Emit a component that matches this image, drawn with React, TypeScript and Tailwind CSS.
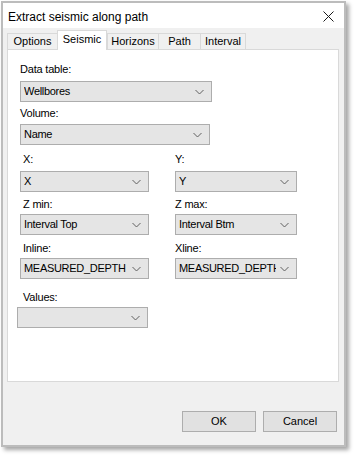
const tabs = [
  { name: "Options", w: "w-[50px]" },
  { name: "Seismic", w: "w-[50px]", active: true },
  { name: "Horizons", w: "w-[51px]" },
  { name: "Path", w: "w-[42px]" },
  { name: "Interval", w: "w-[46px]", last: true },
];

function Chevron() {
  return (
    <svg width="9" height="6" viewBox="0 0 9 6" className="shrink-0">
      <polyline points="0.5,1 4.5,5 8.5,1" fill="none" stroke="#606060" strokeWidth="1" />
    </svg>
  );
}

function Combo({ value, w }: { value: string; w: string }) {
  return (
    <div className={`${w} h-[21px] flex items-center bg-[#e5e5e5] border border-[#adadad] pl-[3px] pr-[7px]`}>
      <span className="flex-1 overflow-hidden whitespace-nowrap text-[11px] leading-[13px] tracking-[-0.3px] text-black mr-[4px]">{value}</span>
      <Chevron />
    </div>
  );
}

function Label({ text, indent }: { text: string; indent?: boolean }) {
  return <div className={`h-[13px] text-[11px] leading-[13px] tracking-[-0.2px] text-black ${indent ? "pl-[3px]" : ""}`}>{text}</div>;
}

export default function App() {
  return (
    <div className="w-[354px] h-[457px] bg-white overflow-hidden" style={{ fontFamily: '"Liberation Sans", Arial, sans-serif' }}>
      <div className="ml-[1px] mt-[1px] w-[345px] h-[446px] border-2 border-[#bcbcbc] flex flex-col shadow-[3px_3px_4px_rgba(0,0,0,0.35)]">
        {/* Title bar */}
        <div className="h-[25px] bg-white flex items-center justify-between pl-[5px] pr-[10px] pt-[2px]">
          <span className="text-[12px] text-black">Extract seismic along path</span>
          <svg width="11" height="11" viewBox="0 0 11 11">
            <path d="M0.5 0.5 L10.5 10.5 M10.5 0.5 L0.5 10.5" stroke="#1a1a1a" strokeWidth="1" />
          </svg>
        </div>

        {/* Body */}
        <div className="flex-1 bg-[#f0f0f0] flex flex-col pl-[4px] pr-[5px] pt-[2px]">
          <div className="flex items-end h-[19px]">
            {tabs.map((t) =>
              t.active ? (
                <div
                  key={t.name}
                  className={`${t.w} h-[20px] -mb-px relative z-10 bg-white border-l border-t border-r border-[#d9d9d9] flex items-center justify-center text-[11px] text-black pb-[2px]`}
                >
                  {t.name}
                </div>
              ) : (
                <div
                  key={t.name}
                  className={`${t.w} h-[16px] bg-[#f0f0f0] border-l border-t ${t.last ? "border-r" : ""} border-[#d9d9d9] flex items-center justify-center text-[11px] text-black`}
                >
                  {t.name}
                </div>
              )
            )}
          </div>

          <div className="h-[333px] bg-white border border-[#d9d9d9] pl-[12px]">
            <div className="mt-[13px]">
              <Label text="Data table:" />
              <div className="mt-[5px]">
                <Combo value="Wellbores" w="w-[192px]" />
              </div>
            </div>
            <div className="mt-[5px]">
              <Label text="Volume:" />
              <div className="mt-[4px]">
                <Combo value="Name" w="w-[190px]" />
              </div>
            </div>

            <div className="flex mt-[8px]">
              <div className="w-[155px]">
                <Label text="X:" indent />
                <div className="mt-[5px]">
                  <Combo value="X" w="w-[129px]" />
                </div>
              </div>
              <div>
                <Label text="Y:" />
                <div className="mt-[5px]">
                  <Combo value="Y" w="w-[122px]" />
                </div>
              </div>
            </div>

            <div className="flex mt-[6px]">
              <div className="w-[155px]">
                <Label text="Z min:" indent />
                <div className="mt-[3px]">
                  <Combo value="Interval Top" w="w-[129px]" />
                </div>
              </div>
              <div>
                <Label text="Z max:" />
                <div className="mt-[3px]">
                  <Combo value="Interval Btm" w="w-[122px]" />
                </div>
              </div>
            </div>

            <div className="flex mt-[7px]">
              <div className="w-[155px]">
                <Label text="Inline:" indent />
                <div className="mt-[3px]">
                  <Combo value="MEASURED_DEPTH" w="w-[129px]" />
                </div>
              </div>
              <div>
                <Label text="Xline:" />
                <div className="mt-[3px]">
                  <Combo value="MEASURED_DEPTH" w="w-[122px]" />
                </div>
              </div>
            </div>

            <div className="mt-[12px]">
              <Label text="Values:" indent />
              <div className="mt-[3px] -ml-[3px]">
                <Combo value="" w="w-[131px]" />
              </div>
            </div>
          </div>

          <div className="flex justify-end gap-[7px] mt-[29px] mr-[2px]">
            <button className="w-[74px] h-[21px] bg-[#e1e1e1] border border-[#adadad] text-[11px] text-black">OK</button>
            <button className="w-[74px] h-[21px] bg-[#e1e1e1] border border-[#adadad] text-[11px] text-black">Cancel</button>
          </div>
        </div>
      </div>
    </div>
  );
}
